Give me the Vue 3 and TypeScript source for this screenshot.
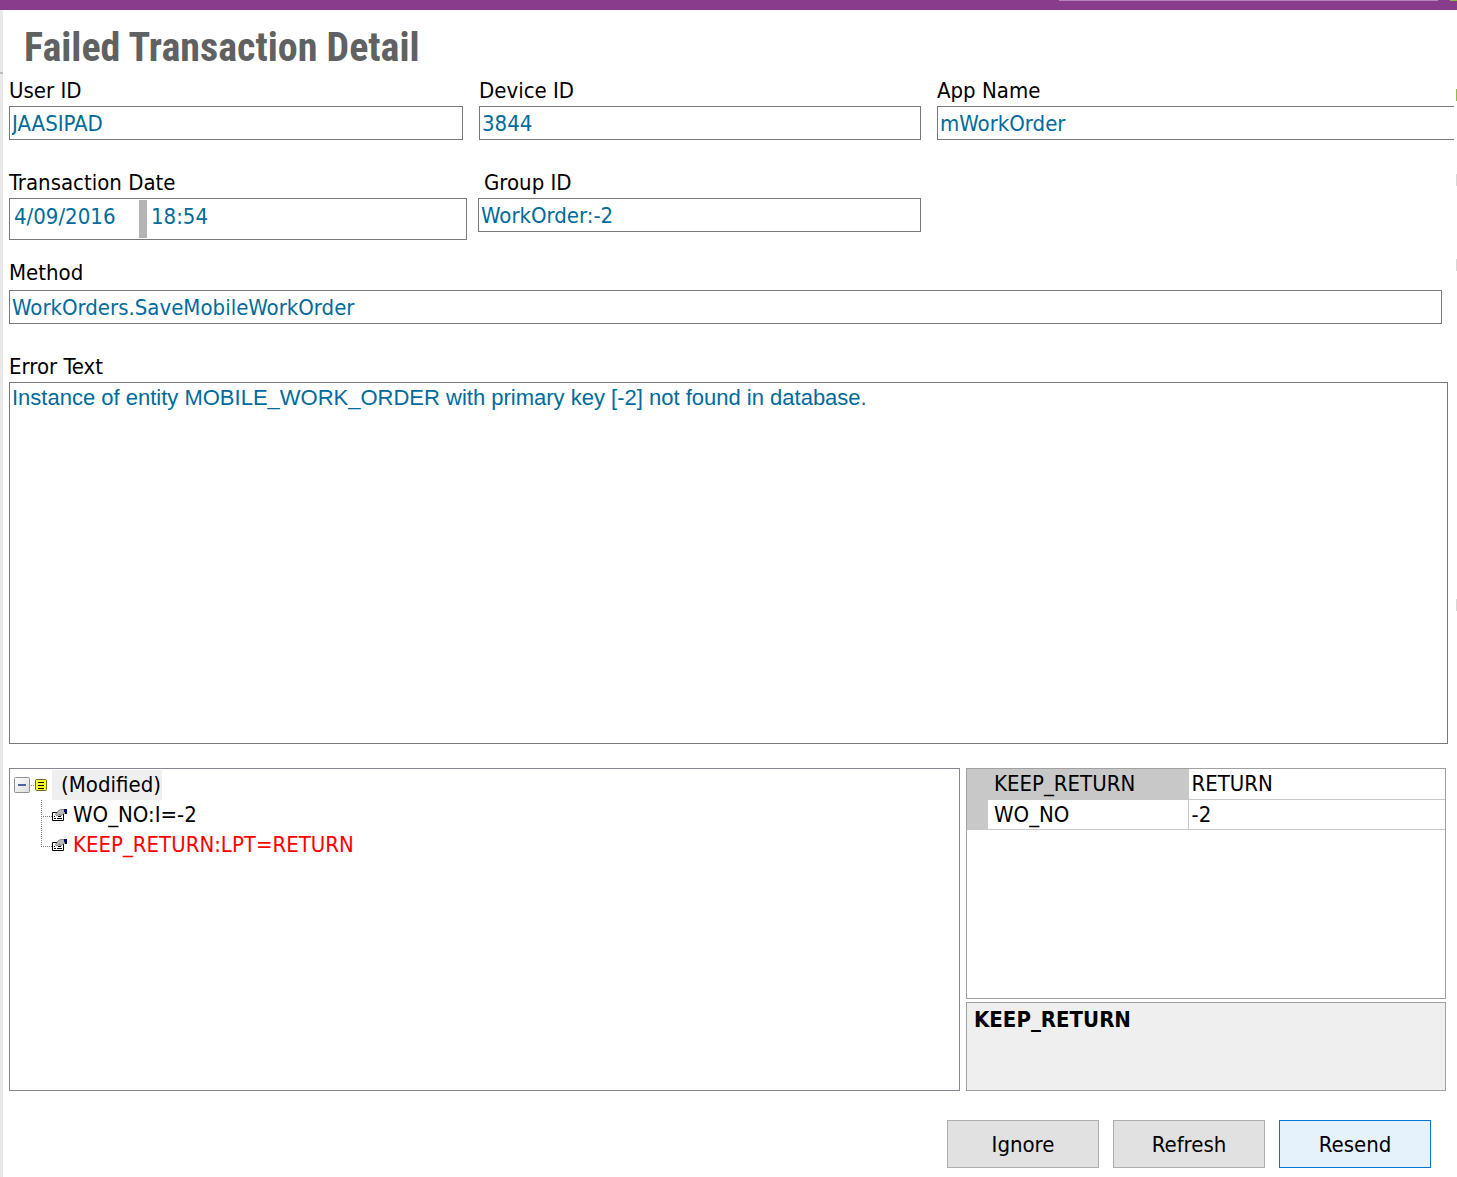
<script setup lang="ts">
import { ref } from 'vue'

interface Property {
  name: string
  value: string
}

interface TreeItem {
  text: string
  changed: boolean
}

const userId = ref('JAASIPAD')
const deviceId = ref('3844')
const appName = ref('mWorkOrder')
const date = ref('4/09/2016')
const time = ref('18:54')
const groupId = ref('WorkOrder:-2')
const method = ref('WorkOrders.SaveMobileWorkOrder')
const errorText = ref('Instance of entity MOBILE_WORK_ORDER with primary key [-2] not found in database.')

const treeItems: TreeItem[] = [
  { text: 'WO_NO:I=-2', changed: false },
  { text: 'KEEP_RETURN:LPT=RETURN', changed: true },
]

const properties: Property[] = [
  { name: 'KEEP_RETURN', value: 'RETURN' },
  { name: 'WO_NO', value: '-2' },
]
const selected = ref('KEEP_RETURN')
</script>

<template>
  <div class="window">
    <header class="titlebar">
      <span class="titlebar-line"></span>
      <span class="titlebar-status"></span>
    </header>
    <div class="body">
      <div class="rail"><span class="rail-line"></span></div>
      <main class="page">
        <h1>Failed Transaction Detail</h1>

        <form @submit.prevent>
          <div class="row top-row">
            <div class="field">
              <label for="user">User ID</label>
              <input id="user" v-model="userId" class="box" type="text" />
            </div>
            <div class="field">
              <label for="device">Device ID</label>
              <input id="device" v-model="deviceId" class="box" type="text" />
            </div>
            <div class="field">
              <label for="app">App Name</label>
              <input id="app" v-model="appName" class="box open" type="text" />
            </div>
          </div>

          <div class="row second-row">
            <div class="field">
              <label for="date">Transaction Date</label>
              <div class="box datetime">
                <input id="date" v-model="date" class="date" type="text" />
                <span class="splitter"></span>
                <input v-model="time" class="time" type="text" aria-label="Transaction time" />
              </div>
            </div>
            <div class="field">
              <label for="group" class="indented">Group ID</label>
              <input id="group" v-model="groupId" class="box" type="text" />
            </div>
          </div>

          <div class="field method">
            <label for="method">Method</label>
            <input id="method" v-model="method" class="box" type="text" />
          </div>

          <div class="field error">
            <label for="error">Error Text</label>
            <textarea id="error" v-model="errorText" class="box"></textarea>
          </div>

          <div class="details">
            <ul class="tree">
              <li>
                <div class="node">
                  <svg width="16" height="16" viewBox="0 0 16 16">
                    <defs>
                      <linearGradient id="toggle-fill" x1="0" y1="0" x2="1" y2="1">
                        <stop offset="0" stop-color="#fff" />
                        <stop offset="1" stop-color="#dcdcdc" />
                      </linearGradient>
                    </defs>
                    <rect x=".5" y=".5" width="15" height="15" rx="1" fill="url(#toggle-fill)" stroke="#919191" />
                    <path d="M4 8h8" stroke="#4b63a7" stroke-width="2" />
                  </svg>
                  <span class="stem"></span>
                  <svg width="12" height="12" viewBox="0 0 12 12">
                    <rect x=".5" y=".5" width="11" height="11" rx="1" fill="#f6f62a" stroke="#6b6b30" />
                    <path d="M3 3.5h6M3 6.5h6M3 9.5h6" stroke="#000" />
                  </svg>
                  <span class="root-text">(Modified)</span>
                </div>
                <ul class="children">
                  <li v-for="item in treeItems" :key="item.text" class="node child" :class="{ changed: item.changed }">
                    <span class="branch"></span>
                    <svg width="15" height="14" viewBox="0 0 15 14">
                      <path d="M.5 4.5h11v8H.5z" fill="#fff" stroke="#000" />
                      <path d="M2 10.5h2m1 0h5M2 8.5h1m3 0h3" stroke="#000" />
                      <path d="M3.500 6.500l3-4 2-1h4v4l-2 1-1.500 1.500-1.500-.5.5-1.500-2 1.500-1.500.5z" fill="#b8b8b8" stroke="#555" stroke-width=".6" />
                      <path d="M12 1h3v5h-2V4h-1z" fill="#00007c" />
                    </svg>
                    <span>{{ item.text }}</span>
                  </li>
                </ul>
              </li>
            </ul>

            <div class="side">
              <div class="grid">
                <table>
                  <tbody>
                    <tr v-for="p in properties" :key="p.name" :class="{ selected: p.name === selected }" @click="selected = p.name">
                      <td class="gutter"></td>
                      <th scope="row">{{ p.name }}</th>
                      <td>{{ p.value }}</td>
                    </tr>
                  </tbody>
                </table>
              </div>
              <div class="description">{{ selected }}</div>
            </div>
          </div>

          <div class="actions">
            <button type="button">Ignore</button>
            <button type="button">Refresh</button>
            <button type="submit" class="primary">Resend</button>
          </div>
        </form>
      </main>
      <span class="mark green"></span>
      <span class="mark first"></span>
      <span class="mark second"></span>
      <span class="mark third"></span>
    </div>
  </div>
</template>

<style>
body {
  margin: 0;
  background: #fff;
}
</style>

<style scoped>
* {
  box-sizing: border-box;
}

.window {
  display: flex;
  flex-direction: column;
  min-height: 100vh;
  overflow: hidden;
  background: #fff;
  color: #000;
  font-family: Tahoma, "DejaVu Sans Condensed", "Noto Sans", sans-serif;
  font-size: 22px;
  line-height: 28px;
}

.titlebar {
  display: flex;
  justify-content: flex-end;
  gap: 12px;
  height: 10px;
  background: #873d8c;
}

.titlebar-line {
  width: 26%;
  height: 1px;
  background: #b784ba;
}

.titlebar-status {
  width: 7px;
  height: 1px;
  background: #8cbf3f;
}

.body {
  position: relative;
  display: flex;
  flex: 1;
}

.rail {
  width: 3px;
  padding-top: 62px;
  background: #e8e9eb;
}

.rail-line {
  display: block;
  height: 2px;
  background: #bcbdc0;
}

.page {
  flex: 1;
  min-width: 0;
  padding: 14px 3px 9px 6px;
}

h1 {
  margin: 0 0 4px 15px;
  color: #606163;
  font-family: "Roboto Condensed", "Open Sans Condensed", sans-serif;
  font-size: 40px;
  font-weight: 700;
  line-height: 48px;
}

.row {
  display: grid;
}

.top-row {
  grid-template-columns: 454fr 442fr 517fr;
  gap: 16px;
}

.second-row {
  grid-template-columns: 458fr 443fr 522fr;
  gap: 11px;
  margin-top: 28px;
}

.field {
  display: flex;
  flex-direction: column;
  min-width: 0;
}

label {
  line-height: 30px;
}

.indented {
  padding-left: 6px;
}

.box {
  width: 100%;
  height: 34px;
  margin: 0;
  padding: 0 2px;
  border: 1px solid #7a7a7a;
  border-radius: 0;
  outline: none;
  background: #fff;
  color: #006b9c;
  font: inherit;
}

.open {
  border-right: 0;
}

.datetime {
  display: flex;
  height: 42px;
  padding: 1px;
}

.datetime input {
  height: 32px;
  padding: 0 4px;
  border: 0;
  outline: none;
  background: none;
  color: inherit;
  font: inherit;
}

.datetime .date {
  width: 128px;
  padding: 0 3px;
}

.datetime .time {
  flex: 1;
  min-width: 0;
}

.splitter {
  width: 8px;
  background: #b4b4b4;
}

.method {
  gap: 2px;
  margin: 18px 12px 0 0;
}

.error {
  margin: 28px 6px 0 0;
}

.error textarea {
  display: block;
  height: 362px;
  padding-top: 1px;
  resize: none;
  font-family: "Liberation Sans", Arial, sans-serif;
}

.details {
  display: grid;
  grid-template-columns: 951fr 480fr;
  gap: 6px;
  margin: 24px 8px 0 0;
}

.tree {
  margin: 0;
  padding: 1px 4px;
  border: 1px solid #828790;
  list-style: none;
  line-height: 30px;
}

.node {
  display: flex;
  align-items: center;
}

.stem {
  width: 3px;
  margin: 0 1px;
  border-top: 1px dotted #808080;
}

.root-text {
  margin-left: 5px;
  padding: 0 1px 0 9px;
  background: #efefef;
}

.children {
  margin: 0 0 0 27px;
  padding: 0;
  list-style: none;
}

.child {
  gap: 6px;
}

.branch {
  align-self: flex-start;
  width: 11px;
  height: 17px;
  margin-right: -6px;
  border-bottom: 1px dotted #808080;
  border-left: 1px dotted #808080;
}

.child + .child .branch {
  height: 31px;
  margin-top: -14px;
}

.changed {
  color: #f00;
}

.side {
  display: grid;
  grid-template-rows: 231px 89px;
  gap: 3px;
}

.grid {
  border: 1px solid #a0a0a0;
}

table {
  width: 100%;
  border-collapse: collapse;
  table-layout: fixed;
}

th,
td {
  height: 30px;
  padding: 1px 3px 0;
  border-bottom: 1px solid #c8c8c8;
  font-weight: 400;
  line-height: 28px;
  text-align: left;
}

th {
  width: 200px;
  padding: 1px 6px 0;
  border-right: 1px solid #c8c8c8;
}

.gutter {
  width: 21px;
  background: #c8c8c8;
}

.selected th {
  background: #c8c8c8;
}

.description {
  padding: 3px 7px;
  border: 1px solid #a0a0a0;
  background: #efefef;
  font-weight: 700;
}

.actions {
  display: flex;
  justify-content: flex-end;
  gap: 14px;
  margin: 29px 23px 0 0;
}

button {
  width: 152px;
  height: 48px;
  padding: 1px 0 0;
  border: 1px solid #adadad;
  border-radius: 0;
  background: #e1e1e1;
  color: #000;
  font: inherit;
}

.primary {
  border-color: #0078d7;
  background: #e5f1fb;
}

/* Slivers of the neighbouring panel's markers along the right edge */
.mark {
  position: absolute;
  right: 0;
  width: 1px;
  height: 12px;
  background: #d8d8d8;
}

.green {
  top: 79px;
  background: #8cbf3f;
}

.first {
  top: 164px;
}

.second {
  top: 249px;
}

.third {
  top: 589px;
}
</style>
